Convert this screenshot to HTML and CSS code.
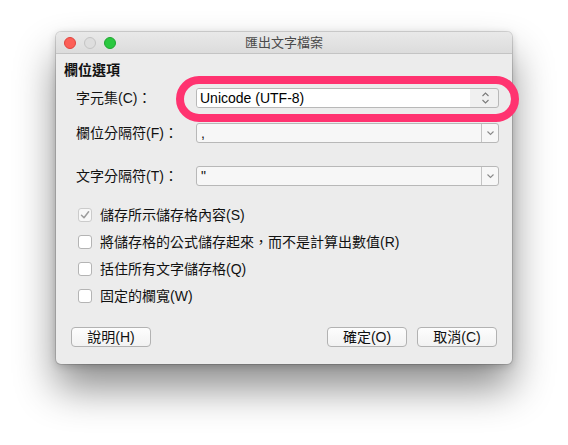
FILE: index.html
```html
<!DOCTYPE html>
<html lang="zh-Hant">
<head>
<meta charset="utf-8">
<title>匯出文字檔案</title>
<link rel="stylesheet" href="styles.css">
</head>
<body>
<div class="stage">
  <div class="window">
    <div class="titlebar">
      <div class="lights">
        <span class="light red"></span>
        <span class="light gray"></span>
        <span class="light green"></span>
      </div>
      <div class="title">匯出文字檔案</div>
      <div class="spacer"></div>
    </div>
    <div class="content">
      <div class="heading">欄位選項</div>

      <div class="field-row row1">
        <span class="label">字元集(C)：</span>
        <div class="select-wrap">
          <div class="select popup">
            <span class="value">Unicode (UTF-8)</span>
            <span class="stepper">
              <svg width="9" height="14" viewBox="0 0 9 14"><path d="M1.5 5 L4.5 2 L7.5 5 M1.5 9 L4.5 12 L7.5 9" fill="none" stroke="#7a7a7a" stroke-width="1.1"/></svg>
            </span>
          </div>
          <div class="ring"></div>
        </div>
      </div>

      <div class="field-row row2">
        <span class="label">欄位分隔符(F)：</span>
        <div class="select combo">
          <span class="value">,</span>
          <span class="drop">
            <svg width="9" height="6" viewBox="0 0 9 6"><path d="M1.5 1.5 L4.5 4.5 L7.5 1.5" fill="none" stroke="#8a8a8a" stroke-width="1.1"/></svg>
          </span>
        </div>
      </div>

      <div class="field-row row3">
        <span class="label">文字分隔符(T)：</span>
        <div class="select combo">
          <span class="value">"</span>
          <span class="drop">
            <svg width="9" height="6" viewBox="0 0 9 6"><path d="M1.5 1.5 L4.5 4.5 L7.5 1.5" fill="none" stroke="#8a8a8a" stroke-width="1.1"/></svg>
          </span>
        </div>
      </div>

      <div class="checks">
        <div class="check-row">
          <span class="box checked disabled">
            <svg width="12" height="12" viewBox="0 0 12 12"><path d="M2.5 6.2 L5 8.7 L9.6 2.8" fill="none" stroke="#9c9c9c" stroke-width="1.5" stroke-linecap="round" stroke-linejoin="round"/></svg>
          </span>
          <span class="check-text">儲存所示儲存格內容(S)</span>
        </div>
        <div class="check-row">
          <span class="box"></span>
          <span class="check-text">將儲存格的公式儲存起來，而不是計算出數值(R)</span>
        </div>
        <div class="check-row">
          <span class="box"></span>
          <span class="check-text">括住所有文字儲存格(Q)</span>
        </div>
        <div class="check-row">
          <span class="box"></span>
          <span class="check-text">固定的欄寬(W)</span>
        </div>
      </div>

      <div class="buttons">
        <button class="btn">說明(H)</button>
        <div class="btn-group">
          <button class="btn">確定(O)</button>
          <button class="btn">取消(C)</button>
        </div>
      </div>
    </div>
  </div>
</div>
</body>
</html>
```

FILE: styles.css
```css
html, body {
  margin: 0;
  padding: 0;
  background: #ffffff;
}

body {
  font-family: "Liberation Sans", "Noto Sans CJK TC", sans-serif;
  font-size: 14px;
  color: #111;
}

.stage {
  padding: 32px 0 0 56px;
  height: 445px;
  box-sizing: border-box;
  overflow: hidden;
}

.window {
  width: 456px;
  height: 332px;
  box-sizing: border-box;
  background: #ececec;
  border-radius: 5px;
  box-shadow: 0 24px 40px rgba(0, 0, 0, 0.45), 0 2px 8px rgba(0, 0, 0, 0.18), 0 0 0 1px rgba(0, 0, 0, 0.13);
}

.titlebar {
  height: 21px;
  border-bottom: 1px solid #c4c4c4;
  border-radius: 5px 5px 0 0;
  background: linear-gradient(#e9e9e9, #dcdcdc);
  display: grid;
  grid-template-columns: 1fr auto 1fr;
  align-items: center;
}

.lights {
  display: flex;
  gap: 8px;
  padding-left: 8px;
}

.light {
  width: 12px;
  height: 12px;
  box-sizing: border-box;
  border-radius: 50%;
}

.light.red {
  background: #fc5f57;
  border: 1px solid #e0443e;
}

.light.gray {
  background: #dedede;
  border: 1px solid #c4c4c4;
}

.light.green {
  background: #2bc840;
  border: 1px solid #1fa630;
}

.title {
  font-size: 13px;
  color: #4a4a4a;
  line-height: 21px;
}

.content {
  padding: 8px 0 0 0;
}

.heading {
  font-weight: bold;
  padding-left: 8px;
  line-height: 17px;
  height: 17px;
}

.field-row {
  display: grid;
  grid-template-columns: 120px 303px;
  align-items: center;
  padding-left: 20px;
  height: 20px;
}

.row1 { margin-top: 9px; }
.row2 { margin-top: 15px; }
.row3 { margin-top: 23px; }

.label {
  line-height: 20px;
  white-space: nowrap;
}

.select-wrap {
  position: relative;
}

.select {
  height: 20px;
  box-sizing: border-box;
  border: 1px solid #b8b8b8;
  border-radius: 3px;
  display: flex;
  align-items: stretch;
  overflow: hidden;
}

.select .value {
  flex: 1;
  padding-left: 3px;
  line-height: 18px;
  white-space: nowrap;
}

.popup {
  background: #f0f0f0;
}

.popup .value {
  background: #ffffff;
  color: #000;
}

.stepper {
  width: 26px;
  display: flex;
  align-items: center;
  justify-content: center;
  padding-left: 2px;
}

.combo {
  background: #f7f7f7;
}

.combo .value {
  padding-left: 4px;
}

.drop {
  width: 16px;
  border-left: 1px solid #c4c4c4;
  display: flex;
  align-items: center;
  justify-content: center;
}

.ring {
  position: absolute;
  left: -20px;
  right: -20px;
  top: -12px;
  bottom: -14px;
  border: 8px solid #ff3370;
  border-radius: 24px;
  pointer-events: none;
}

.checks {
  margin-top: 15px;
  padding-left: 22px;
}

.check-row {
  height: 27px;
  display: flex;
  align-items: center;
  gap: 8px;
}

.box {
  width: 14px;
  height: 14px;
  box-sizing: border-box;
  border: 1px solid #b4b4b4;
  border-radius: 3px;
  background: #ffffff;
  display: flex;
  align-items: center;
  justify-content: center;
}

.box.disabled {
  border-color: #cbcbcb;
  background: #f7f7f7;
}

.check-text {
  line-height: 18px;
  white-space: nowrap;
}

.buttons {
  margin-top: 18px;
  padding: 0 15px;
  display: flex;
  justify-content: space-between;
}

.btn-group {
  display: flex;
  gap: 10px;
}

.btn {
  width: 80px;
  height: 20px;
  box-sizing: border-box;
  border: 1px solid #b2b2b2;
  border-radius: 4px;
  background: linear-gradient(#fdfdfd, #f2f2f2);
  font-family: "Liberation Sans", "Noto Sans CJK TC", sans-serif;
  font-size: 14px;
  color: #111;
  padding: 0;
  line-height: 18px;
}
```
